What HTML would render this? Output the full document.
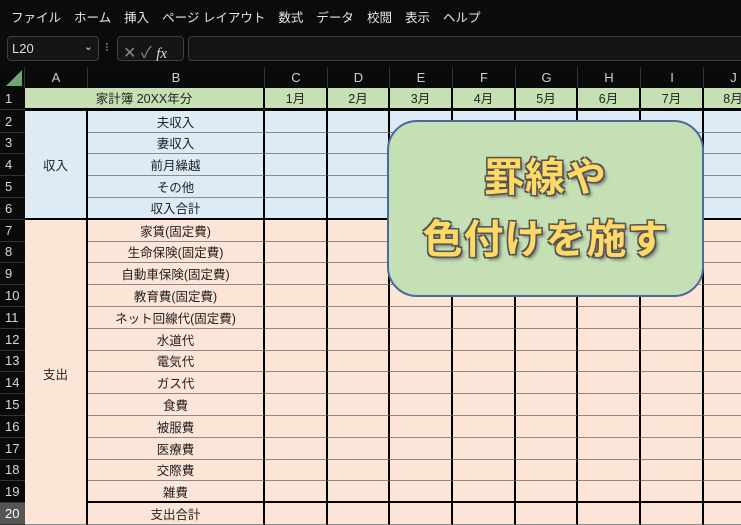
<!DOCTYPE html>
<html><head><meta charset="utf-8"><style>
*{margin:0;padding:0;box-sizing:border-box}
body{width:741px;height:518px;overflow:hidden;background:#0b0b0b;font-family:"Liberation Sans","Noto Sans CJK JP",sans-serif;position:relative}
.menu{position:absolute;top:0;left:0;height:32px;width:741px;display:flex;align-items:center;color:#e6e6e6;font-size:12.5px}
.menu span{margin-left:11px;margin-right:2px}
.fb{position:absolute;top:36px;height:25px;border:1px solid #3f3f3f;border-radius:4px;background:#151515;color:#ddd;font-size:13px}
.grid{position:absolute;top:67px;left:0;display:grid;grid-template-columns:25px 63px 177px 63px 62px 63px 63px 62px 63px 63px 60px;grid-template-rows:21px repeat(20,21.8px);font-size:12.5px;color:#222}
.grid>div{display:flex;align-items:center;justify-content:center;white-space:nowrap;overflow:hidden}
.h{background:#0a0a0a;color:#d0d0d0;border-right:1px solid #333;font-size:13px}
.n{background:#0a0a0a;color:#d8d8d8;border-bottom:1px solid #333;font-size:13px;justify-content:flex-start!important;padding-left:5px}
.c{border-right:2px solid #000;border-bottom:1px solid #8a8a8a}
.g{background:#c6e0b4;border-bottom:2px solid #000}
.b{background:#ddebf7}.p{background:#fce4d6}
.tb{border-bottom:2px solid #000}
.call{position:absolute;left:387px;top:120px;width:317px;height:177px;background:#c5e0b4;border:2px solid #4a6a9c;border-radius:30px;display:flex;flex-direction:column;align-items:center;justify-content:center;font-weight:bold;font-size:40px;color:#ffd966;line-height:62px;text-shadow:-1.5px -1.5px 0 #555,1.5px -1.5px 0 #555,-1.5px 1.5px 0 #555,1.5px 1.5px 0 #555,3px 3px 3px #7a7a7a;letter-spacing:1px}
</style></head><body>
<div class="menu"><span>ファイル</span><span>ホーム</span><span>挿入</span><span>ページ レイアウト</span><span>数式</span><span>データ</span><span>校閲</span><span>表示</span><span>ヘルプ</span></div>
<div class="fb" style="left:7px;width:92px;padding:4px 0 0 4px">L20<span style="position:absolute;right:5px;top:3px;font-size:11px">⌄</span></div>
<div style="position:absolute;left:105px;top:40px;color:#aaa;font-size:12px">⁝</div>
<div class="fb" style="left:117px;width:67px;color:#888;padding:2px 0 0 5px;font-size:16px">✕ ✓ <i style="color:#ddd;font-family:'Liberation Serif',serif;font-size:15px">fx</i></div>
<div class="fb" style="left:188px;width:560px"></div>
<div class="grid">
<div class="h" style="position:relative"><svg width="25" height="21" style="position:absolute;left:0;top:0"><polygon points="22,3 22,19 6,19" fill="#6fa86a"/></svg></div>
<div class="h">A</div><div class="h">B</div><div class="h">C</div><div class="h">D</div><div class="h">E</div><div class="h">F</div><div class="h">G</div><div class="h">H</div><div class="h">I</div><div class="h">J</div>
<div class="n">1</div><div class="c g" style="grid-column:span 2">家計簿 20XX年分</div><div class="c g">1月</div><div class="c g">2月</div><div class="c g">3月</div><div class="c g">4月</div><div class="c g">5月</div><div class="c g">6月</div><div class="c g">7月</div><div class="c g">8月</div>
</div>
<div class="grid" id="g2" style="top:110.8px;grid-template-rows:repeat(19,21.8px)"></div>
<div class="call"><div>罫線や</div><div>色付けを施す</div></div>
<script>
var g=document.getElementById('g2'),h='';
var lab=['夫収入','妻収入','前月繰越','その他','収入合計','家賃(固定費)','生命保険(固定費)','自動車保険(固定費)','教育費(固定費)','ネット回線代(固定費)','水道代','電気代','ガス代','食費','被服費','医療費','交際費','雑費','支出合計'];
for(var r=0;r<19;r++){var row=r+2,cl=r<5?'b':'p',tb=(r==4||r==17)?' tb':'';
h+='<div class="n" style="'+(row==20?'background:#555;color:#fff':'')+'">'+row+'</div>';
if(r==0)h+='<div class="c b tb" style="grid-row:span 5">収入</div>';
if(r==5)h+='<div class="c p" style="grid-row:span 14;padding-top:4px">支出</div>';
h+='<div class="c '+cl+tb+'">'+lab[r]+'</div>';
for(var c=0;c<8;c++)h+='<div class="c '+cl+tb+'"></div>';}
g.innerHTML=h;
</script>
</body></html>
